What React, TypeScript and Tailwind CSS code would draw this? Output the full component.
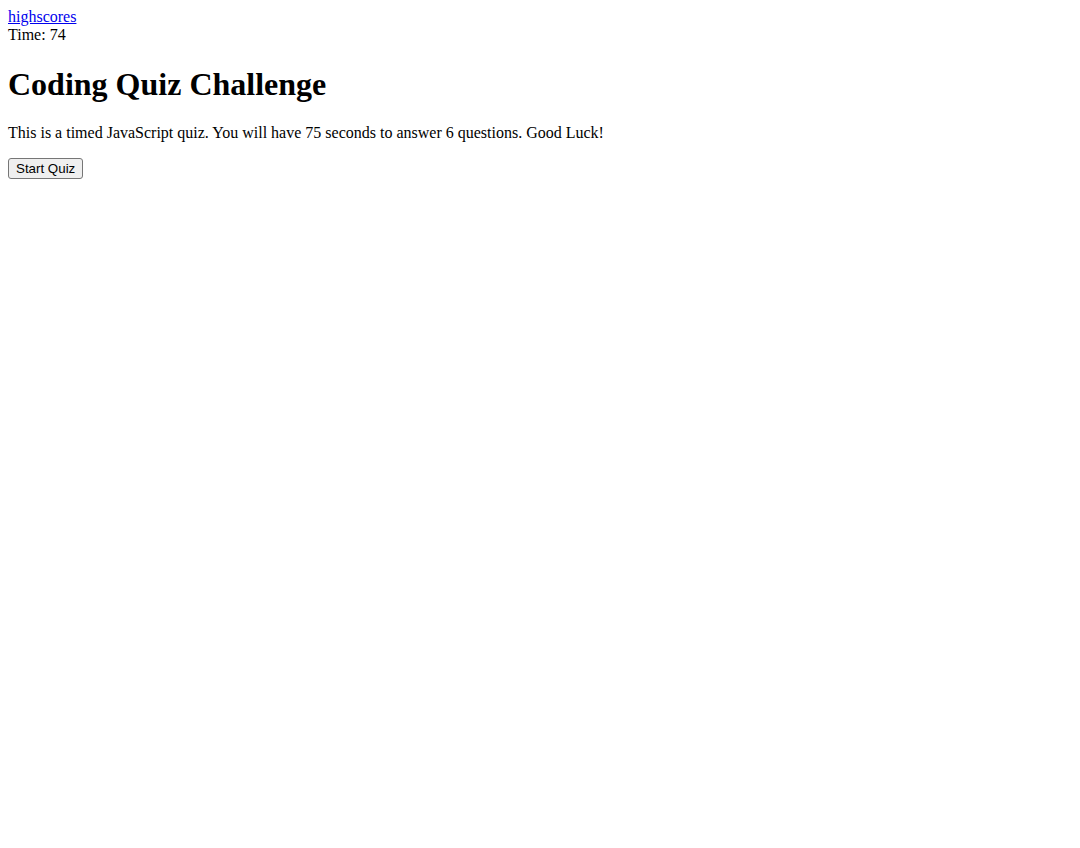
export default function App() {
  return (
    <div className="min-h-[848px] bg-white p-2 font-['Liberation_Serif',serif] text-base leading-[1.15] text-black">
      <header>
        <a href="#" className="text-[#0000ee] underline">
          highscores
        </a>
        <div>Time: 74</div>
      </header>

      <main>
        <h1 className="my-[21.44px] text-[32px] font-bold leading-[1.15]">Coding Quiz Challenge</h1>
        <p className="mt-4 mb-[15px]">
          This is a timed JavaScript quiz. You will have 75 seconds to answer 6 questions. Good Luck!
        </p>
        <button className="rounded-[3px] border border-[#767676] bg-[#efefef] px-[7px] py-[2px] font-['Liberation_Sans',sans-serif] text-[13.33px] leading-[1.15] text-black">
          Start Quiz
        </button>
      </main>
    </div>
  )
}
